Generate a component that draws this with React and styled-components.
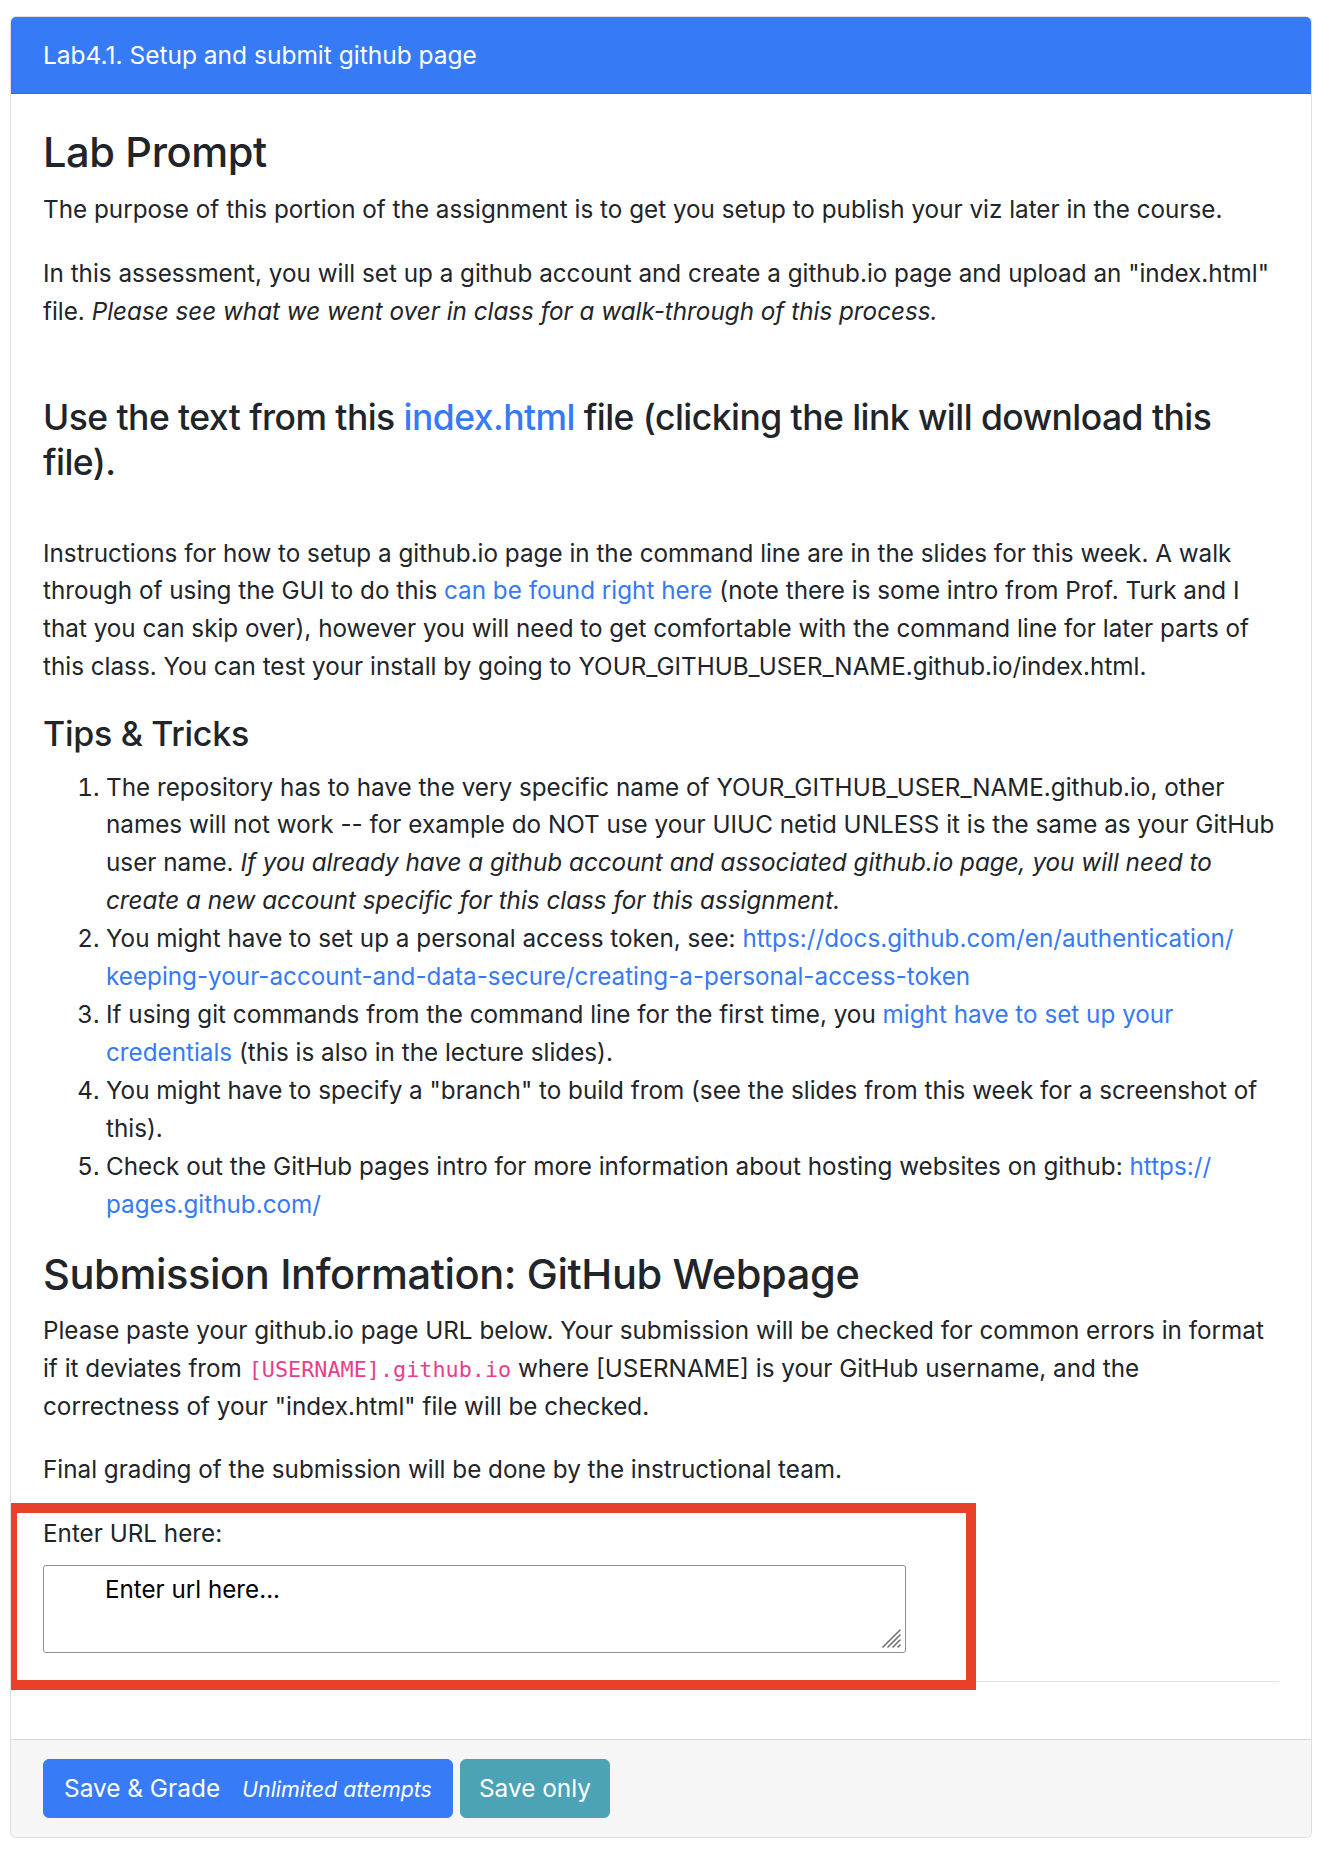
import React from "react"
import styled, { createGlobalStyle } from "styled-components"

const GlobalStyle = createGlobalStyle`
  body {
    margin: 0;
    background: #ffffff;
    font-family: Inter, "Noto Sans", "Liberation Sans", sans-serif;
    color: #212529;
  }
`

const Page = styled.div`
  padding: 16px 24px 24px 10px;
`

const Card = styled.div`
  width: 1302px;
  box-sizing: border-box;
  border: 1px solid rgba(0, 0, 0, 0.125);
  border-radius: 6px;
  background: #ffffff;
  overflow: hidden;
`

const CardHeader = styled.div`
  background: #367af6;
  color: #ffffff;
  padding: 19px 32px;
  font-size: 24.5px;
  line-height: 38.4px;
  border-bottom: 1px solid #2f6ee0;
`

const CardBody = styled.div`
  padding: 32px;
  font-size: 24.25px;
  line-height: 37.9px;
`

const Heading = styled.h2`
  margin: ${(p) => p.$top || 0}px 0 12.8px;
  font-weight: 500;
  font-size: ${(p) => p.$size}px;
  line-height: ${(p) => p.$lh}px;
  letter-spacing: ${(p) => p.$spacing || 0}px;
  color: #212529;
`

const Paragraph = styled.p`
  margin: ${(p) => p.$top || 0}px 0 25.6px;
`

const Link = styled.a`
  color: #367af6;
  text-decoration: none;
`

const Code = styled.code`
  font-family: "DejaVu Sans Mono", "Liberation Mono", monospace;
  font-size: 21.8px;
  line-height: 1;
  color: #e83e8c;
`

const List = styled.ol`
  margin: 0 0 25.6px;
  padding-left: 63px;
`

const FormGroup = styled.div`
  position: relative;
  display: flex;
  flex-direction: column;
  align-items: flex-start;
`

const Label = styled.label`
  margin-bottom: 12px;
`

const Field = styled.div`
  position: relative;
`

const TextArea = styled.textarea`
  display: block;
  width: 863px;
  height: 88px;
  box-sizing: border-box;
  border: 1px solid #8d8d96;
  border-radius: 3px;
  padding: 9px 8px 6px 61px;
  resize: none;
  font-family: Inter, "Noto Sans", "Liberation Sans", sans-serif;
  font-size: 24.2px;
  line-height: 30px;
  color: #000000;

  &::placeholder {
    color: #000000;
  }
`

const Grip = styled.svg`
  position: absolute;
  right: 4px;
  bottom: 4px;
  width: 22px;
  height: 22px;
  pointer-events: none;
`

const Highlight = styled.div`
  position: absolute;
  left: -36px;
  top: -12px;
  width: 969px;
  height: 187px;
  box-sizing: border-box;
  border: 10px solid #e8412a;
  pointer-events: none;
`

const Divider = styled.hr`
  margin: 28px 0 25.6px;
  border: 0;
  border-top: 1px solid #e3e3e3;
`

const CardFooter = styled.div`
  display: flex;
  gap: 7px;
  background: #f6f6f6;
  border-top: 1px solid rgba(0, 0, 0, 0.125);
  padding: 19px 32px;
`

const Button = styled.button`
  display: flex;
  align-items: baseline;
  gap: 22px;
  height: 59px;
  padding: 0 ${(p) => (p.$variant === "info" ? 18 : 20)}px;
  border: 1px solid ${(p) => (p.$variant === "info" ? "#4ca3b5" : "#387bf6")};
  border-radius: 6px;
  background: ${(p) => (p.$variant === "info" ? "#4ca3b5" : "#387bf6")};
  color: #ffffff;
  font-family: Inter, "Noto Sans", "Liberation Sans", sans-serif;
  font-size: 24.4px;
  line-height: 57px;
`

const Attempts = styled.em`
  font-size: 21.4px;
`

export default function App() {
  return (
    <Page>
      <GlobalStyle />
      <Card>
        <CardHeader>Lab4.1. Setup and submit github page</CardHeader>
        <CardBody>
          <Heading $size={41.6} $lh={52} $spacing={-0.4}>Lab Prompt</Heading>
          <Paragraph>
            The purpose of this portion of the assignment is to get you setup to publish your viz later in the course.
          </Paragraph>
          <Paragraph>
            In this assessment, you will set up a github account and create a github.io page and upload an
            "index.html" file. <em>Please see what we went over in class for a walk-through of this process.</em>
          </Paragraph>
          <Heading as="h4" $size={35.5} $lh={45} $spacing={-0.55} $top={64}>
            Use the text from this <Link href="#">index.html</Link> file (clicking the link will download this
            file).
          </Heading>
          <Paragraph $top={50}>
            Instructions for how to setup a github.io page in the command line are in the slides for this week. A
            walk through of using the GUI to do this <Link href="#">can be found right here</Link> (note there is
            some intro from Prof. Turk and I that you can skip over), however you will need to get comfortable with
            the command line for later parts of this class. You can test your install by going to
            YOUR_GITHUB_USER_NAME.github.io/index.html.
          </Paragraph>
          <Heading as="h5" $size={34} $lh={44} $spacing={-0.3}>Tips &amp; Tricks</Heading>
          <List>
            <li>
              The repository has to have the very specific name of YOUR_GITHUB_USER_NAME.github.io, other names
              will not work -- for example do NOT use your UIUC netid UNLESS it is the same as your GitHub user
              name.{" "}
              <em>
                If you already have a github account and associated github.io page, you will need to create a new
                account specific for this class for this assignment.
              </em>
            </li>
            <li>
              You might have to set up a personal access token, see:{" "}
              <Link href="#">
                https://docs.github.com/en/authentication/<wbr />
                keeping-your-account-and-data-secure/creating-a-personal-access-token
              </Link>
            </li>
            <li>
              If using git commands from the command line for the first time, you{" "}
              <Link href="#">might have to set up your credentials</Link> (this is also in the lecture slides).
            </li>
            <li>
              You might have to specify a "branch" to build from (see the slides from this week for a screenshot of
              this).
            </li>
            <li>
              Check out the GitHub pages intro for more information about hosting websites on github:{" "}
              <Link href="#">
                https://<wbr />
                pages.github.com/
              </Link>
            </li>
          </List>
          <Heading $size={41.6} $lh={50} $spacing={-0.4}>Submission Information: GitHub Webpage</Heading>
          <Paragraph>
            Please paste your github.io page URL below. Your submission will be checked for common errors in format
            if it deviates from <Code>[USERNAME].github.io</Code> where [USERNAME] is your GitHub username, and the
            correctness of your "index.html" file will be checked.
          </Paragraph>
          <Paragraph>Final grading of the submission will be done by the instructional team.</Paragraph>
          <FormGroup>
            <Label htmlFor="url">Enter URL here:</Label>
            <Field>
              <TextArea id="url" placeholder="Enter url here..." />
              <Grip viewBox="0 0 22 22">
                <g stroke="#6f6f74" strokeWidth="1.6" strokeLinecap="round">
                  <line x1="3" y1="20" x2="20" y2="3" />
                  <line x1="8" y1="20" x2="20" y2="8" />
                  <line x1="13" y1="20" x2="20" y2="13" />
                  <line x1="18" y1="20" x2="20" y2="18" />
                </g>
              </Grip>
            </Field>
            <Highlight />
          </FormGroup>
          <Divider />
        </CardBody>
        <CardFooter>
          <Button>
            Save &amp; Grade <Attempts>Unlimited attempts</Attempts>
          </Button>
          <Button $variant="info">Save only</Button>
        </CardFooter>
      </Card>
    </Page>
  )
}
